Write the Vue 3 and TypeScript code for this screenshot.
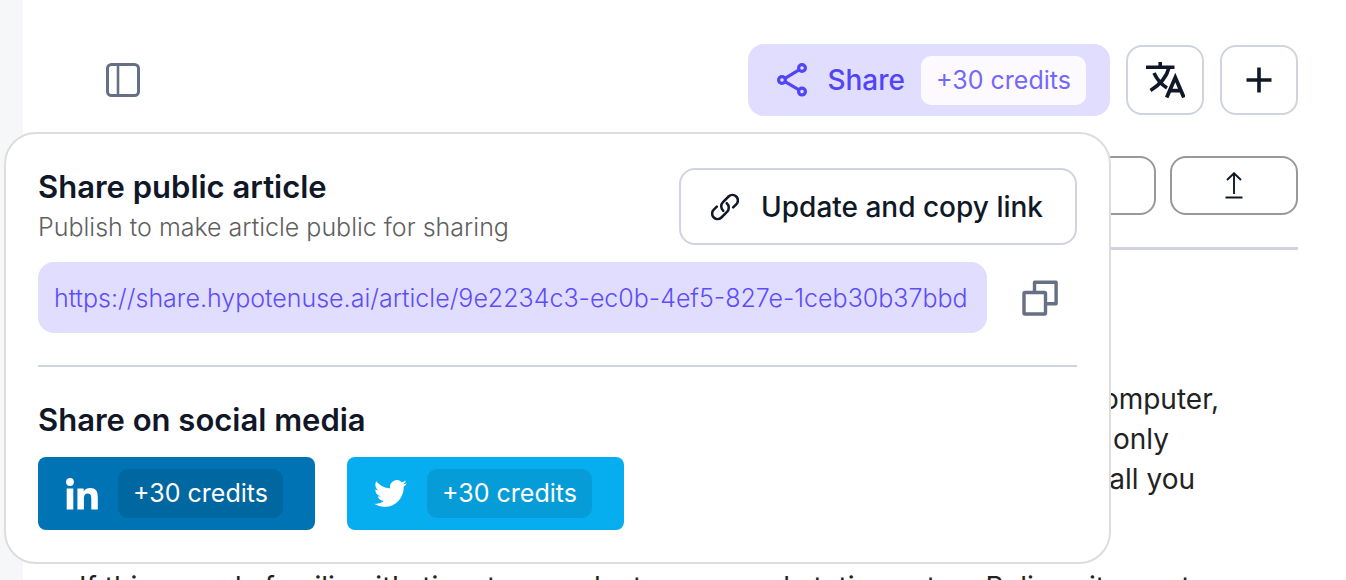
<script setup lang="ts">
import { ref } from 'vue'

const shareUrl = ref('https://share.hypotenuse.ai/article/9e2234c3-ec0b-4ef5-827e-1ceb30b37bbd')
const reward = '+30 credits'
</script>

<template>
  <div class="app">
    <aside class="rail"></aside>
    <main class="page">
      <header class="topbar">
        <button class="plain panel-toggle" type="button" aria-label="Toggle sidebar">
          <svg width="34" height="34" viewBox="0 0 34 34" fill="none" stroke="#667085" stroke-width="3">
            <rect x="1.5" y="1.5" width="31" height="31" rx="4" />
            <path d="M12 1.5v31" stroke-width="2.6" />
          </svg>
        </button>
        <div class="actions">
          <button class="share" type="button">
            <svg width="30" height="34" viewBox="0 0 30 34" fill="none" stroke="#5145f5" stroke-width="3.2">
              <circle cx="5" cy="17" r="3.4" />
              <circle cx="25" cy="5" r="3.4" />
              <circle cx="25" cy="28.600" r="3.4" />
              <path d="M8 15.300 22 6.800M8 18.700l14 8.200" />
            </svg>
            <span class="share-label">Share</span>
            <span class="chip chip-light">{{ reward }}</span>
          </button>
          <button class="square" type="button" aria-label="Translate">
            <svg width="39" height="36" viewBox="0 0 39 36" fill="none" stroke="#101828" stroke-width="3.600">
              <path d="M0 5.200h28.500M14.200 0v5M23 5.500C21 14 14 22.500 4.500 28.500M8 11c3 6.500 7.500 11.500 13 15" />
              <path d="M20.700 35.500 29.300 15.500l8.600 20M23.500 28.600h11.600" stroke-width="3.800" />
            </svg>
          </button>
          <button class="square" type="button" aria-label="Add">
            <svg width="26" height="26" viewBox="0 0 26 26" stroke="#101828" stroke-width="3.600">
              <path d="M13 .5v25M.5 13h25" />
            </svg>
          </button>
        </div>
      </header>

      <div class="tools">
        <button class="pill" type="button" aria-label="More tools"></button>
        <button class="pill" type="button" aria-label="Export">
          <svg width="18" height="28" viewBox="0 0 18 28" fill="none" stroke="#101828" stroke-width="1.900">
            <path d="M9 22V1.500M2 8l7-6.800L16 8M.5 25.500h17" />
          </svg>
        </button>
      </div>

      <article class="article">
        <p class="tail">
          <span class="line">computer,</span>
          <span class="line line-b">only</span>
          <span class="line line-c">all you</span>
        </p>
        <p>If this sounds familiar, it's time to reevaluate your workstation setup. Believe it or not</p>
      </article>

      <section class="popover" aria-labelledby="share-title">
        <div class="publish">
          <div>
            <h2 id="share-title">Share public article</h2>
            <p class="hint">Publish to make article public for sharing</p>
          </div>
          <button class="update" type="button">
            <svg width="28" height="28" viewBox="0 0 28 28" fill="none" stroke="#101828" stroke-width="2.500" stroke-linecap="round">
              <path d="M15.800 10.200a6 6 0 0 1 .2 8.700l-5.600 5.600a5.400 5.400 0 0 1-7.600 0 5.400 5.400 0 0 1 0-7.800l3-3" />
              <path d="M12.200 17.800a6 6 0 0 1-.2-8.700l5.600-5.600a5.400 5.400 0 0 1 7.600 0 5.400 5.400 0 0 1 0 7.800l-3 3" />
            </svg>
            <span>Update and copy link</span>
          </button>
        </div>
        <div class="link-row">
          <input v-model="shareUrl" class="url" type="text" aria-label="Public link" readonly />
          <button class="plain" type="button" aria-label="Copy link">
            <svg width="36" height="36" viewBox="0 0 36 36" fill="none" stroke="#667085" stroke-width="3.400" stroke-linejoin="round">
              <path d="M12.500 11V2.200h21.600v21.600H25" />
              <rect x="2" y="12.500" width="21.500" height="21.500" rx="1" />
            </svg>
          </button>
        </div>
        <hr />
        <h2>Share on social media</h2>
        <div class="social">
          <button class="network linkedin" type="button" aria-label="Share on LinkedIn, +30 credits">
            <svg width="32" height="32" viewBox="0 0 32 32" fill="#fff">
              <circle cx="4" cy="4" r="3.900" />
              <path d="M.700 10.500h6.600V31.500H.700zM11.400 10.500h6.300v2.900c1-1.900 3.200-3.400 6.500-3.400 6.500 0 7.600 4.200 7.600 9.900v11.600h-6.500V21.200c0-2.600-.1-5.700-3.500-5.700s-3.900 2.700-3.900 5.500v10.500h-6.500z" />
            </svg>
            <span class="chip">{{ reward }}</span>
          </button>
          <button class="network twitter" type="button" aria-label="Share on Twitter, +30 credits">
            <svg width="33" height="33" viewBox="0 0 24 24" fill="#fff">
              <path d="M23.953 4.570a10 10 0 0 1-2.825.775 4.958 4.958 0 0 0 2.163-2.723 10 10 0 0 1-3.127 1.184 4.920 4.920 0 0 0-8.384 4.482C7.690 8.095 4.067 6.130 1.640 3.162a4.822 4.822 0 0 0-.666 2.475c0 1.710.870 3.213 2.188 4.096a4.904 4.904 0 0 1-2.228-.616v.060a4.923 4.923 0 0 0 3.946 4.827 4.996 4.996 0 0 1-2.212.085 4.936 4.936 0 0 0 4.604 3.417 9.867 9.867 0 0 1-6.102 2.105c-.390 0-.779-.023-1.170-.067a13.995 13.995 0 0 0 7.557 2.209c9.053 0 13.998-7.496 13.998-13.985 0-.210 0-.420-.015-.630a9.935 9.935 0 0 0 2.460-2.548z" />
            </svg>
            <span class="chip">{{ reward }}</span>
          </button>
        </div>
      </section>
    </main>
  </div>
</template>

<style>
body {
  margin: 0;
  background: #fff;
}
</style>

<style scoped>
.app {
  display: flex;
  height: 100vh;
  overflow: hidden;
  font-family: Inter, 'Liberation Sans', sans-serif;
  color: #101828;
}
.app * {
  box-sizing: border-box;
}
svg {
  display: block;
  flex: none;
}
button {
  display: flex;
  align-items: center;
  padding: 0;
  border: 0;
  font: inherit;
  color: inherit;
  cursor: pointer;
}
.plain {
  background: none;
}
.rail {
  flex: none;
  width: 23px;
  background: #f6f7f9;
}
.page {
  position: relative;
  flex: 1;
  min-width: 0;
  padding: 44px 48px 0 56px;
}
.topbar {
  display: flex;
  align-items: center;
  justify-content: space-between;
}
.panel-toggle {
  margin-left: 27px;
}
.actions {
  display: flex;
  align-items: center;
  gap: 16px;
}
.share {
  height: 72px;
  padding: 0 24px 0 29px;
  border-radius: 16px;
  background: #e1ddff;
}
.share-label {
  margin: 0 16px 0 20px;
  font-size: 28px;
  font-weight: 500;
  color: #5145f5;
}
.chip {
  display: block;
  min-width: 165px;
  padding: 0 14px;
  border-radius: 10px;
  background: rgba(0, 0, 0, 0.1);
  font-size: 25px;
  line-height: 49px;
  text-align: center;
  white-space: nowrap;
}
.chip-light {
  background: #fcfaff;
  color: #7468fa;
}
.square {
  justify-content: center;
  width: 78px;
  height: 70px;
  border: 2px solid #d0d3e0;
  border-radius: 16px;
  background: #fff;
}
.tools {
  display: flex;
  justify-content: flex-end;
  gap: 14px;
  padding: 40px 0 32px;
  border-bottom: 3px solid #d0d3dc;
}
.pill {
  justify-content: center;
  width: 128px;
  height: 59px;
  border: 2px solid #999;
  border-radius: 16px;
  background: #fff;
}
.article {
  padding-top: 129px;
  font-size: 28px;
  line-height: 40px;
  color: #222;
  white-space: nowrap;
}
.article p {
  margin: 0;
}
.article .tail {
  display: flex;
  flex-direction: column;
  align-items: flex-end;
  padding-right: 79px;
  margin-bottom: 68px;
}
.line-b {
  padding-right: 50px;
}
.line-c {
  padding-right: 24px;
}
.popover {
  position: absolute;
  top: 132px;
  right: 235px;
  left: -19px;
  padding: 34px 32px 32px;
  border: 2px solid #ddd;
  border-radius: 32px;
  background: #fff;
}
h2 {
  margin: 0;
  font-size: 31px;
  line-height: 38px;
  font-weight: 600;
}
.publish {
  display: flex;
  align-items: flex-start;
  justify-content: space-between;
}
.hint {
  margin: 0;
  font-size: 25px;
  font-weight: 300;
  line-height: 42px;
  color: #606060;
}
.update {
  gap: 22px;
  height: 77px;
  padding: 0 32px 0 30px;
  border: 2px solid #d0d3e0;
  border-radius: 16px;
  background: #fff;
  font-size: 28px;
  font-weight: 500;
}
.link-row {
  display: flex;
  align-items: center;
  gap: 35px;
  padding: 14px 19px 32px 0;
}
.url {
  flex: 1;
  min-width: 0;
  height: 71px;
  padding: 0 16px;
  border: 0;
  border-radius: 16px;
  outline: 0;
  background: #e1ddff;
  font: inherit;
  font-size: 25px;
  font-weight: 300;
  color: #5c4dfa;
}
hr {
  height: 2px;
  margin: 0 0 34px;
  border: 0;
  background: #d0d3e0;
}
.social {
  display: flex;
  gap: 32px;
  padding-top: 18px;
}
.network {
  gap: 20px;
  height: 73px;
  padding: 0 32px 0 28px;
  border-radius: 8px;
  color: #fff;
}
.linkedin {
  background: #0073b4;
}
.twitter {
  padding-left: 27px;
  background: #06aef0;
}
</style>
